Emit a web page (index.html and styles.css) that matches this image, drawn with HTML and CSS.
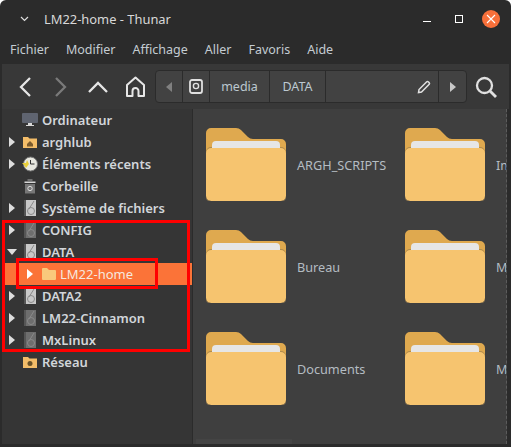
FILE: index.html
```html
<!DOCTYPE html>
<html lang="fr">
<head>
    <meta charset="UTF-8">
    <title>LM22-home - Thunar</title>
    <link rel="stylesheet" href="styles.css">
</head>
<body>
    <svg width="0" height="0" class="defs">
        <symbol id="folder" viewBox="0 0 80 73">
            <path d="M0 66V5a5 5 0 0 1 5-5h25q3 0 5 2l7 7q2 2 5 2h28a5 5 0 0 1 5 5v51z" fill="#dfa94f"/>
            <path d="M6 24v-7a4 4 0 0 1 4-4h60a4 4 0 0 1 4 4v7z" fill="#e6e6e6"/>
            <path d="M0 25a5 5 0 0 1 5-5h70a5 5 0 0 1 5 5v43a5 5 0 0 1-5 5H5a5 5 0 0 1-5-5z" fill="#f6c46f"/>
            <path d="M0 24a5 5 0 0 1 5-5h1v1H5a5 5 0 0 0-5 5zM80 24a5 5 0 0 0-5-5h-1v1h1a5 5 0 0 1 5 5z" fill="#b08c4f"/>
            <path d="M0 68a5 5 0 0 0 5 5h70a5 5 0 0 0 5-5v1a4 4 0 0 1-4 4H4a4 4 0 0 1-4-4z" fill="#a98a55"/>
        </symbol>
        <symbol id="disk" viewBox="0 0 12 16">
            <rect width="12" height="16" fill="currentColor"/>
            <rect width="2" height="16" fill="#555"/>
            <circle cx="7" cy="11" r="3.500" fill="none" stroke="#8a8a8a"/>
            <path d="M5 9 10 1" stroke="#8a8a8a" fill="none"/>
        </symbol>
    </svg>

    <div class="window">
        <header class="titlebar">
            <svg class="title-menu" width="9" height="6" viewBox="0 0 9 6"><path d="M1 1l3.500 3.500L8 1" fill="none" stroke="#ddd" stroke-width="1.200"/></svg>
            <span class="title">LM22-home - Thunar</span>
            <div class="win-btns">
                <span class="win-min"></span>
                <span class="win-max"></span>
                <span class="win-close">
                    <svg width="10" height="10" viewBox="0 0 10 10"><path d="M1 1l8 8M9 1l-8 8" stroke="#fff" stroke-width="1.100"/></svg>
                </span>
            </div>
        </header>

        <nav class="menubar">
            <span>Fichier</span>
            <span>Modifier</span>
            <span>Affichage</span>
            <span>Aller</span>
            <span>Favoris</span>
            <span>Aide</span>
        </nav>

        <div class="toolbar">
            <svg class="tool-back" width="12" height="20" viewBox="0 0 12 20"><path d="M11 1 2 10l9 9" fill="none" stroke="#e6e6e6" stroke-width="2.300"/></svg>
            <svg class="tool-forward" width="12" height="20" viewBox="0 0 12 20"><path d="M1 1l9 9-9 9" fill="none" stroke="#7a7a7a" stroke-width="2.300"/></svg>
            <svg class="tool-up" width="20" height="12" viewBox="0 0 20 12"><path d="M1 11l9-9 9 9" fill="none" stroke="#e6e6e6" stroke-width="2.300"/></svg>
            <svg class="tool-home" width="19" height="21" viewBox="0 0 19 21"><path d="M1 9 9.500 1.500 18 9v11h-5.500v-5a3 3 0 0 0-6 0v5H1z" fill="none" stroke="#e6e6e6" stroke-width="2" stroke-linejoin="round"/></svg>
            <div class="pathbar">
                <div class="crumb crumb-arrow"><svg width="6" height="10" viewBox="0 0 6 10"><path d="M6 0v10L0 5z" fill="#808080"/></svg></div>
                <div class="crumb crumb-drive"><svg width="14" height="15" viewBox="0 0 14 15"><rect x="1" y="1" width="12" height="13" rx="2" fill="none" stroke="#e0e0e0" stroke-width="1.800"/><circle cx="7" cy="7" r="2.600" fill="none" stroke="#e0e0e0" stroke-width="1.400"/></svg></div>
                <div class="crumb crumb-media">media</div>
                <div class="crumb crumb-data">DATA</div>
                <div class="crumb crumb-fill"><svg width="14" height="14" viewBox="0 0 14 14"><path d="M1.500 12.500 2 9.500 9.500 2q1-1 2 0l.5.500q1 1 0 2L4.500 12z" fill="none" stroke="#e0e0e0" stroke-width="1.500"/></svg></div>
                <div class="crumb crumb-arrow"><svg width="6" height="10" viewBox="0 0 6 10"><path d="M0 0v10l6-5z" fill="#c8c8c8"/></svg></div>
            </div>
            <svg class="search-icon" width="22" height="22" viewBox="0 0 22 22"><circle cx="9.500" cy="9.500" r="7.500" fill="none" stroke="#e0e0e0" stroke-width="2.300"/><path d="M15 15l6 6" stroke="#e0e0e0" stroke-width="2.800"/></svg>
        </div>

        <div class="content">
            <aside class="sidebar">
                <div class="row">
                    <span class="arrow-none"></span>
                    <svg class="row-icon" width="16" height="16" viewBox="0 0 16 16"><rect y="1" width="16" height="10" rx="1" fill="#5f6470"/><path d="M6 11h4v2h2v1H4v-1h2z" fill="#d8d8d8"/></svg>
                    <span>Ordinateur</span>
                </div>
                <div class="row">
                    <span class="arrow"></span>
                    <svg class="row-icon" width="16" height="16" viewBox="0 0 16 16"><path d="M1 3h5l1.500 1.500H15V14H1z" fill="#f3bd69"/><path d="M5 10l3-3 3 3v2.500H5z" fill="#7a5a2c"/></svg>
                    <span>arghlub</span>
                </div>
                <div class="row">
                    <span class="arrow"></span>
                    <svg class="row-icon" width="16" height="16" viewBox="0 0 16 16"><circle cx="8.500" cy="8" r="7" fill="#e8e8e0" stroke="#777"/><path d="M8.500 4v4h4" fill="none" stroke="#333"/><path d="M0 7h4l1-3 2 4-3 4-2-3z" fill="#e8cf3a"/></svg>
                    <span>Éléments récents</span>
                </div>
                <div class="row">
                    <span class="arrow-none"></span>
                    <svg class="row-icon" width="16" height="16" viewBox="0 0 16 16"><path d="M2.500 3.500h11V5h-11z" fill="#d8d8d8"/><path d="M5.500 1.500h5v1h-5z" fill="#aaa"/><path d="M3 6h10v9.500H3z" fill="#777"/><circle cx="8" cy="10.500" r="2.200" fill="none" stroke="#ddd"/></svg>
                    <span>Corbeille</span>
                </div>
                <div class="row">
                    <span class="arrow"></span>
                    <svg class="row-icon disk-light" width="12" height="16"><use href="#disk"/></svg>
                    <span>Système de fichiers</span>
                </div>
                <div class="row">
                    <span class="arrow"></span>
                    <svg class="row-icon disk-dark" width="12" height="16"><use href="#disk"/></svg>
                    <span>CONFIG</span>
                </div>
                <div class="row">
                    <span class="arrow-down"></span>
                    <svg class="row-icon disk-light" width="12" height="16"><use href="#disk"/></svg>
                    <span>DATA</span>
                </div>
                <div class="row row-active">
                    <span class="arrow arrow-sub"></span>
                    <svg class="row-icon" width="16" height="14" viewBox="0 0 16 14"><path d="M1 3V2a1 1 0 0 1 1-1h4l2 2h6a1 1 0 0 1 1 1v8a1 1 0 0 1-1 1H2a1 1 0 0 1-1-1z" fill="#f9c97c"/></svg>
                    <span>LM22-home</span>
                </div>
                <div class="row">
                    <span class="arrow"></span>
                    <svg class="row-icon disk-light" width="12" height="16"><use href="#disk"/></svg>
                    <span>DATA2</span>
                </div>
                <div class="row">
                    <span class="arrow"></span>
                    <svg class="row-icon disk-dark" width="12" height="16"><use href="#disk"/></svg>
                    <span>LM22-Cinnamon</span>
                </div>
                <div class="row">
                    <span class="arrow"></span>
                    <svg class="row-icon disk-dark" width="12" height="16"><use href="#disk"/></svg>
                    <span>MxLinux</span>
                </div>
                <div class="row">
                    <span class="arrow-none"></span>
                    <svg class="row-icon" width="16" height="14" viewBox="0 0 16 14"><path d="M1 2h5l1.500 1.500H15V13H1z" fill="#f3bd69"/><circle cx="8" cy="8.500" r="2.500" fill="#6a5228"/></svg>
                    <span>Réseau</span>
                </div>
            </aside>

            <main class="files">
                <div class="file"><svg class="folder" width="80" height="73"><use href="#folder"/></svg><span>ARGH_SCRIPTS</span></div>
                <div class="file"><svg class="folder" width="80" height="73"><use href="#folder"/></svg><span>Images</span></div>
                <div class="file"><svg class="folder" width="80" height="73"><use href="#folder"/></svg><span>Bureau</span></div>
                <div class="file"><svg class="folder" width="80" height="73"><use href="#folder"/></svg><span>Modèles</span></div>
                <div class="file"><svg class="folder" width="80" height="73"><use href="#folder"/></svg><span>Documents</span></div>
                <div class="file"><svg class="folder" width="80" height="73"><use href="#folder"/></svg><span>Musique</span></div>
                <div class="scrollbar"></div>
            </main>
        </div>

        <div class="mark mark-group"></div>
        <div class="mark mark-item"></div>
    </div>
</body>
</html>
```

FILE: styles.css
```css
* {
    margin: 0;
    padding: 0;
    box-sizing: border-box;
}
body {
    background-color: #fff;
    font-family: "Noto Sans", sans-serif;
    overflow: hidden;
}
.defs {
    display: block;
    height: 0;
}
.window {
    position: relative;
    width: 511px;
    height: 447px;
    background-color: #2b2b2b;
    border-radius: 6px 6px 0 0;
    overflow: hidden;
    color: #e0e0e0;
}

/* title bar */
.titlebar {
    display: flex;
    align-items: center;
    height: 37px;
    padding: 0 11px 0 20px;
}
.title-menu {
    margin-right: 15px;
}
.title {
    font-size: 12.9px;
    color: #d8d8d8;
}
.win-btns {
    display: flex;
    align-items: center;
    margin-left: auto;
}
.win-min {
    width: 8px;
    height: 1px;
    margin-top: 6px;
    background-color: #fff;
}
.win-max {
    width: 8px;
    height: 8px;
    margin-left: 24px;
    border: 1px solid #fff;
}
.win-close {
    display: flex;
    justify-content: center;
    align-items: center;
    width: 18px;
    height: 18px;
    margin-left: 19px;
    border-radius: 50%;
    background-color: #f8703a;
}

/* menu */
.menubar {
    display: flex;
    align-items: center;
    gap: 17px;
    height: 27px;
    padding: 0 10px 2px;
    font-size: 12.5px;
    color: #c4ccd2;
}

/* toolbar */
.toolbar {
    display: flex;
    align-items: center;
    height: 45px;
    margin: 0 2px;
    padding-left: 17px;
    background-color: #383838;
}
.tool-back,
.tool-forward,
.tool-up,
.tool-home {
    flex: none;
}
.tool-forward {
    margin-left: 24px;
}
.tool-up {
    margin-left: 21px;
}
.tool-home {
    margin-left: 18px;
}
.pathbar {
    display: flex;
    width: 312px;
    height: 33px;
    margin-left: 10px;
    border: 1px solid #2b2b2b;
    border-radius: 4px;
    background-color: #424242;
}
.crumb {
    display: flex;
    justify-content: center;
    align-items: center;
    border-right: 1px solid #2b2b2b;
    font-size: 12.5px;
    color: #bcc8d0;
}
.crumb:last-child {
    border-right: none;
}
.crumb-arrow,
.crumb-drive {
    width: 27px;
}
.crumb-media {
    width: 60px;
}
.crumb-data {
    width: 56px;
}
.crumb-fill {
    flex: 1;
    justify-content: flex-end;
    padding-right: 7px;
}
.search-icon {
    margin-left: 8px;
}

/* body */
.content {
    display: flex;
    height: 335px;
    margin: 0 2px;
}
.sidebar {
    flex: none;
    width: 191px;
    background-color: #353535;
    border-right: 1px solid #2b2b2b;
}
.row {
    display: flex;
    align-items: center;
    height: 22px;
    padding-left: 5px;
    font-size: 13px;
    font-weight: 600;
    color: #d2d6da;
}
.row-active {
    background-color: #fb7338;
    font-weight: 400;
    color: #f6e8df;
}
.row-icon {
    flex: none;
    width: 16px;
    margin-right: 4px;
}
.row-active .row-icon {
    margin-right: 3px;
}
.disk-light {
    color: #c8c8c8;
}
.disk-dark {
    color: #6e6e6e;
}
.arrow,
.arrow-none,
.arrow-down {
    flex: none;
    width: 13px;
    margin-left: 2px;
}
.arrow::before {
    content: "";
    display: block;
    width: 0;
    height: 0;
    border-top: 5px solid transparent;
    border-bottom: 5px solid transparent;
    border-left: 6px solid #ddd;
}
.arrow-down::before {
    content: "";
    display: block;
    width: 0;
    height: 0;
    margin-left: -2px;
    border-left: 5px solid transparent;
    border-right: 5px solid transparent;
    border-top: 6px solid #ddd;
}
.arrow-sub {
    margin-left: 20px;
    width: 14px;
}
.arrow-sub::before {
    border-left-color: #fff;
}
.files {
    position: relative;
    flex: none;
    width: 314px;
    display: grid;
    grid-template-columns: 199px 199px;
    grid-auto-rows: 102px;
    padding: 19px 0 0 13px;
    background-color: #3f3f3f;
    border-right: 1px dashed #5c5c5c;
    overflow: hidden;
}
.file {
    display: flex;
    align-items: center;
    align-self: start;
    height: 73px;
    font-size: 12.7px;
    color: #b4bcc2;
    white-space: nowrap;
}
.folder {
    flex: none;
    margin-right: 11px;
}
.scrollbar {
    position: absolute;
    left: 3px;
    bottom: 0;
    width: 96px;
    height: 5px;
    background-color: #444;
}

/* red marks drawn over the screenshot */
.mark {
    position: absolute;
    border: 3px solid #f00;
}
.mark-group {
    left: 2px;
    top: 220px;
    width: 188px;
    height: 132px;
}
.mark-item {
    left: 16px;
    top: 258px;
    width: 142px;
    height: 31px;
}
```
